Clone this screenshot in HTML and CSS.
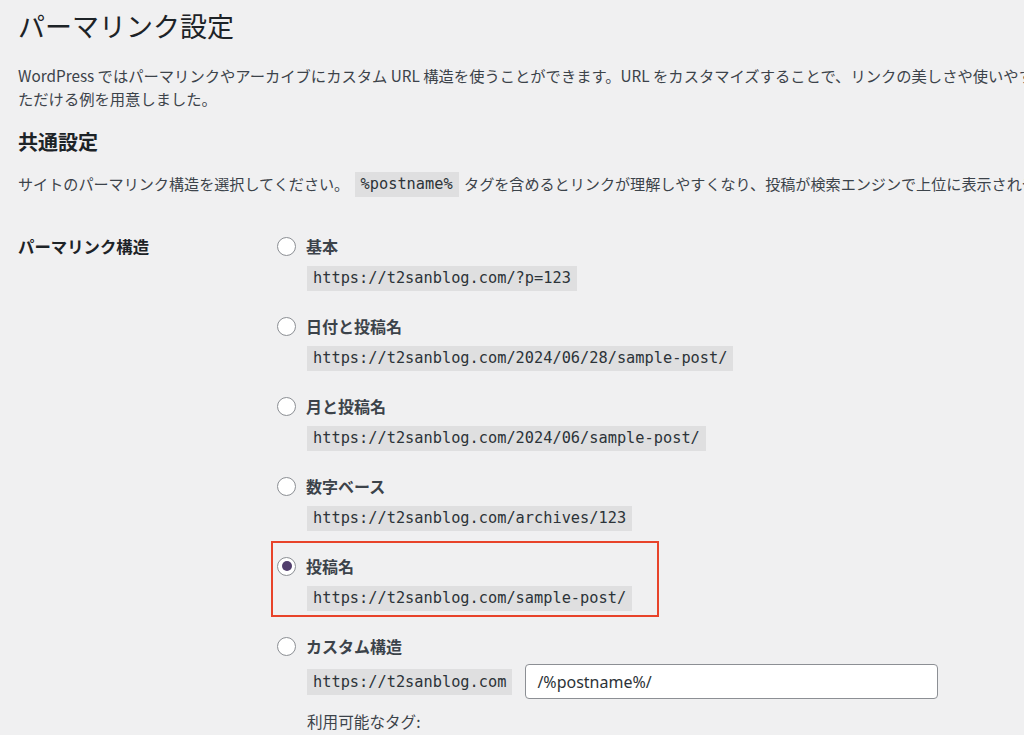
FILE: index.html
```html
<!DOCTYPE html>
<html lang="ja">
<head>
<meta charset="utf-8">
<title>パーマリンク設定</title>
<link rel="stylesheet" href="styles.css">
</head>
<body>
<div class="wrap">
  <h1 class="title">パーマリンク設定</h1>
  <p class="intro">WordPress ではパーマリンクやアーカイブにカスタム URL 構造を使うことができます。URL をカスタマイズすることで、リンクの美しさや使いやすさ、前方互換性を改善できます。多くのタグが利用可能です。ここではいくつかの始めてい<br>ただける例を用意しました。</p>
  <h2 class="section">共通設定</h2>
  <p class="desc">サイトのパーマリンク構造を選択してください。 <code class="tag">%postname%</code> タグを含めるとリンクが理解しやすくなり、投稿が検索エンジンで上位に表示されやすくなります。</p>

  <div class="form">
    <div class="th">パーマリンク構造</div>
    <div class="td">
      <div class="option">
        <label class="row"><span class="radio"></span><span class="lbl">基本</span></label>
        <div class="sub"><code>https://t2sanblog.com/?p=123</code></div>
      </div>
      <div class="option">
        <label class="row"><span class="radio"></span><span class="lbl">日付と投稿名</span></label>
        <div class="sub"><code>https://t2sanblog.com/2024/06/28/sample-post/</code></div>
      </div>
      <div class="option">
        <label class="row"><span class="radio"></span><span class="lbl">月と投稿名</span></label>
        <div class="sub"><code>https://t2sanblog.com/2024/06/sample-post/</code></div>
      </div>
      <div class="option">
        <label class="row"><span class="radio"></span><span class="lbl">数字ベース</span></label>
        <div class="sub"><code>https://t2sanblog.com/archives/123</code></div>
      </div>
      <div class="option highlight">
        <label class="row"><span class="radio checked"></span><span class="lbl">投稿名</span></label>
        <div class="sub"><code>https://t2sanblog.com/sample-post/</code></div>
      </div>
      <div class="option">
        <label class="row"><span class="radio"></span><span class="lbl">カスタム構造</span></label>
        <div class="sub custom"><code class="base">https://t2sanblog.com</code><span class="input">/%postname%/</span></div>
        <div class="sub avail">利用可能なタグ:</div>
      </div>
    </div>
  </div>
</div>
</body>
</html>
```

FILE: styles.css
```css
html, body {
  margin: 0;
  padding: 0;
  background: #f0f0f1;
  overflow: hidden;
}
body {
  width: 1024px;
  height: 735px;
  font-family: "Noto Sans", "Noto Sans CJK JP", sans-serif;
  color: #3c434a;
}
.wrap {
  padding: 8px 0 0 18px;
  width: 1400px;
}
.title {
  margin: 0;
  font-family: "Noto Sans CJK JP", sans-serif;
  font-weight: 400;
  font-size: 27px;
  line-height: 35px;
  color: #1d2327;
}
.intro {
  margin: 21px 0 0;
  font-family: "Noto Sans CJK JP", sans-serif;
  font-size: 15.3px;
  line-height: 23px;
  white-space: nowrap;
}
.section {
  margin: 18px 0 0;
  font-family: "Noto Sans CJK JP", sans-serif;
  font-weight: 700;
  font-size: 20px;
  line-height: 28px;
  color: #1d2327;
}
.desc {
  margin: 14px 0 0;
  font-family: "Noto Sans CJK JP", sans-serif;
  font-size: 15.1px;
  line-height: 26px;
  white-space: nowrap;
}
code {
  font-family: "DejaVu Sans Mono", monospace;
  font-size: 15.3px;
  line-height: 19px;
  padding: 3px 6px;
  background: rgba(0, 0, 0, 0.07);
  color: #2c3338;
  display: inline-block;
}
.tag {
  vertical-align: middle;
  margin: 0 2px;
  position: relative;
  top: -1px;
}
.form {
  margin-top: 35px;
  display: grid;
  grid-template-columns: 259px 1fr;
}
.th {
  font-family: "Noto Sans CJK JP", sans-serif;
  font-weight: 700;
  font-size: 16.4px;
  line-height: 26px;
  color: #1d2327;
}
.td {
  display: flex;
  flex-direction: column;
  gap: 22px;
}
.option {
  display: flex;
  flex-direction: column;
  gap: 7px;
}
.row {
  display: flex;
  align-items: center;
  gap: 10px;
  height: 26px;
}
.radio {
  width: 19px;
  height: 19px;
  box-sizing: border-box;
  border: 1px solid #8c8f94;
  border-radius: 50%;
  background: #fff;
  display: flex;
  align-items: center;
  justify-content: center;
  flex: none;
}
.radio.checked::before {
  content: "";
  width: 10px;
  height: 10px;
  border-radius: 50%;
  background: #523f6d;
}
.lbl {
  font-family: "Noto Sans CJK JP", sans-serif;
  font-weight: 700;
  font-size: 16px;
  color: #3c434a;
}
.sub {
  padding-left: 30px;
  display: flex;
  align-items: center;
}
.highlight {
  width: 388px;
  box-sizing: border-box;
  border: 2px solid #e8432a;
  margin: -12px 0 -6px -6px;
  padding: 10px 0 4px 4px;
}
.custom {
  gap: 13px;
  margin-top: -2px;
}
.custom .base {
  line-height: 20px;
}
.input {
  width: 413px;
  height: 35px;
  box-sizing: border-box;
  background: #fff;
  border: 1px solid #8c8f94;
  border-radius: 4px;
  padding: 0 11px;
  display: flex;
  align-items: center;
  font-family: "Noto Sans", sans-serif;
  font-size: 16px;
  color: #2c3338;
}
.avail {
  margin-top: 3px;
  font-family: "Noto Sans CJK JP", sans-serif;
  font-size: 15.6px;
  line-height: 24px;
}
```
